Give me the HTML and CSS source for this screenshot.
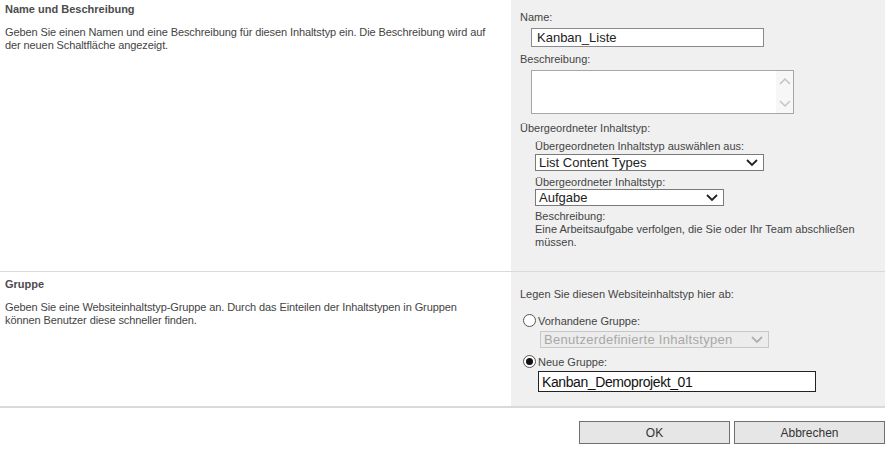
FILE: index.html
```html
<!DOCTYPE html>
<html>
<head>
  <title>Inhaltstyp</title>
  <link rel="stylesheet" href="styles.css">
</head>
<body>
  <div class="page">
    <div class="section first">
      <div class="section-info">
        <h3>Name und Beschreibung</h3>
        <p>Geben Sie einen Namen und eine Beschreibung für diesen Inhaltstyp ein. Die Beschreibung wird auf der neuen Schaltfläche angezeigt.</p>
      </div>
      <div class="section-body">
        <div class="label">Name:</div>
        <div class="field"><input class="text-input" type="text" value="Kanban_Liste"></div>
        <div class="label">Beschreibung:</div>
        <div class="field">
          <div class="textarea">
            <div class="scroll">
              <svg width="14" height="10" viewBox="0 0 14 10"><path d="M2 7 L7 2 L12 7" fill="none" stroke="#c4c4c4" stroke-width="1.5"/></svg>
              <svg width="14" height="10" viewBox="0 0 14 10"><path d="M2 3 L7 8 L12 3" fill="none" stroke="#c4c4c4" stroke-width="1.5"/></svg>
            </div>
          </div>
        </div>
        <div class="label parent-label">Übergeordneter Inhaltstyp:</div>
        <div class="sub">
          <div class="label">Übergeordneten Inhaltstyp auswählen aus:</div>
          <div class="select wide">List Content Types
            <svg width="14" height="10" viewBox="0 0 14 10"><path d="M2 2 L7 7 L12 2" fill="none" stroke="#222" stroke-width="1.8"/></svg>
          </div>
          <div class="label next">Übergeordneter Inhaltstyp:</div>
          <div class="select narrow">Aufgabe
            <svg width="14" height="10" viewBox="0 0 14 10"><path d="M2 2 L7 7 L12 2" fill="none" stroke="#222" stroke-width="1.8"/></svg>
          </div>
          <div class="label desc">Beschreibung:<br>Eine Arbeitsaufgabe verfolgen, die Sie oder Ihr Team abschließen müssen.</div>
        </div>
      </div>
    </div>

    <div class="section second">
      <div class="section-info">
        <h3>Gruppe</h3>
        <p>Geben Sie eine Websiteinhaltstyp-Gruppe an. Durch das Einteilen der Inhaltstypen in Gruppen können Benutzer diese schneller finden.</p>
      </div>
      <div class="section-body">
        <div class="label">Legen Sie diesen Websiteinhaltstyp hier ab:</div>
        <div class="radio-row">
          <span class="radio"></span>
          <span class="radio-label">Vorhandene Gruppe:</span>
        </div>
        <div class="select disabled">Benutzerdefinierte Inhaltstypen
          <svg width="14" height="10" viewBox="0 0 14 10"><path d="M2 2 L7 7 L12 2" fill="none" stroke="#b0b0b0" stroke-width="1.8"/></svg>
        </div>
        <div class="radio-row second-radio">
          <span class="radio checked"></span>
          <span class="radio-label">Neue Gruppe:</span>
        </div>
        <input class="group-input" type="text" value="Kanban_Demoprojekt_01">
      </div>
    </div>

    <div class="buttons">
      <button class="btn">OK</button>
      <button class="btn">Abbrechen</button>
    </div>
  </div>
</body>
</html>
```

FILE: styles.css
```css
* {
  box-sizing: border-box;
}

body {
  margin: 0;
  background: #fff;
  font-family: "Liberation Sans", Arial, sans-serif;
  font-size: 11px;
  color: #444;
}

.page {
  width: 885px;
}

.section {
  display: grid;
  grid-template-columns: 511px 374px;
}

.section.first {
  height: 272px;
  border-bottom: 1px solid #dadada;
}

.section.second {
  height: 136px;
  border-bottom: 2px solid #d9d9d9;
}

.section-info {
  padding: 3px 5px 0 5px;
}

.second .section-info {
  padding-top: 6px;
}

.section-info h3 {
  margin: 0;
  font-size: 11px;
  font-weight: bold;
  color: #4c4c4c;
}

.section-info p {
  margin: 11px 0 0 0;
  line-height: 13px;
  width: 490px;
  letter-spacing: -0.1px;
}

.section-body {
  background: #f0f0f0;
  padding: 11px 0 0 9px;
}

.second .section-body {
  padding-top: 16px;
}

.label {
  line-height: 13px;
}

.field {
  padding: 4px 0 6px 11px;
}

.text-input {
  display: block;
  width: 233px;
  height: 19px;
  border: 1px solid #8a8a8a;
  background: #fff;
  font-family: "Liberation Sans", Arial, sans-serif;
  font-size: 13px;
  color: #222;
  padding: 0 5px;
  margin: 0;
}

.textarea {
  width: 263px;
  height: 44px;
  border: 1px solid #a6a6a6;
  background: #fff;
  display: flex;
  justify-content: flex-end;
}

.scroll {
  width: 17px;
  display: flex;
  flex-direction: column;
  justify-content: space-around;
  align-items: center;
  background: #f7f7f7;
}

.parent-label {
  margin-top: 2px;
}

.sub {
  padding: 5px 0 0 15px;
}

.sub .label.next {
  margin-top: 5px;
}

.select {
  position: relative;
  height: 17px;
  border: 1px solid #7a7a7a;
  background: #fff;
  font-family: "Liberation Sans", Arial, sans-serif;
  font-size: 13px;
  color: #222;
  line-height: 15px;
  padding-left: 3px;
  margin: 1px 0 0 0;
}

.select svg {
  position: absolute;
  right: 4px;
  top: 3px;
}

.select.wide {
  width: 229px;
}

.select.narrow {
  width: 189px;
  margin-top: 0;
}

.desc {
  margin-top: 4px;
  padding-right: 20px;
}

.radio-row {
  display: flex;
  align-items: center;
  margin-top: 11px;
  margin-left: 3px;
}

.radio-row.second-radio {
  margin-top: 5px;
}

.radio {
  width: 13px;
  height: 13px;
  border: 1px solid #555;
  border-radius: 50%;
  background: #fff;
  position: relative;
  margin-right: 2px;
}

.radio.checked::after {
  content: '';
  position: absolute;
  left: 2px;
  top: 2px;
  width: 7px;
  height: 7px;
  border-radius: 50%;
  background: #111;
}

.radio-label {
  line-height: 13px;
  margin-top: 3px;
}

.select.disabled {
  width: 229px;
  margin: 3px 0 0 20px;
  border-color: #c8c8c8;
  background: #ececec;
  color: #a8a8a8;
  letter-spacing: 0.3px;
}

.group-input {
  display: block;
  width: 278px;
  height: 21px;
  margin: 2px 0 0 18px;
  border: 1px solid #222;
  background: #fff;
  font-family: "Liberation Sans", Arial, sans-serif;
  font-size: 14px;
  letter-spacing: -0.4px;
  color: #111;
  padding: 0 3px;
}

.buttons {
  display: flex;
  justify-content: flex-end;
  gap: 4px;
  padding-top: 13px;
}

.btn {
  width: 151px;
  height: 23px;
  border: 1px solid #707070;
  background: #e6e6e6;
  font-family: "Liberation Sans", Arial, sans-serif;
  font-size: 12px;
  color: #333;
  padding: 0;
}
```
